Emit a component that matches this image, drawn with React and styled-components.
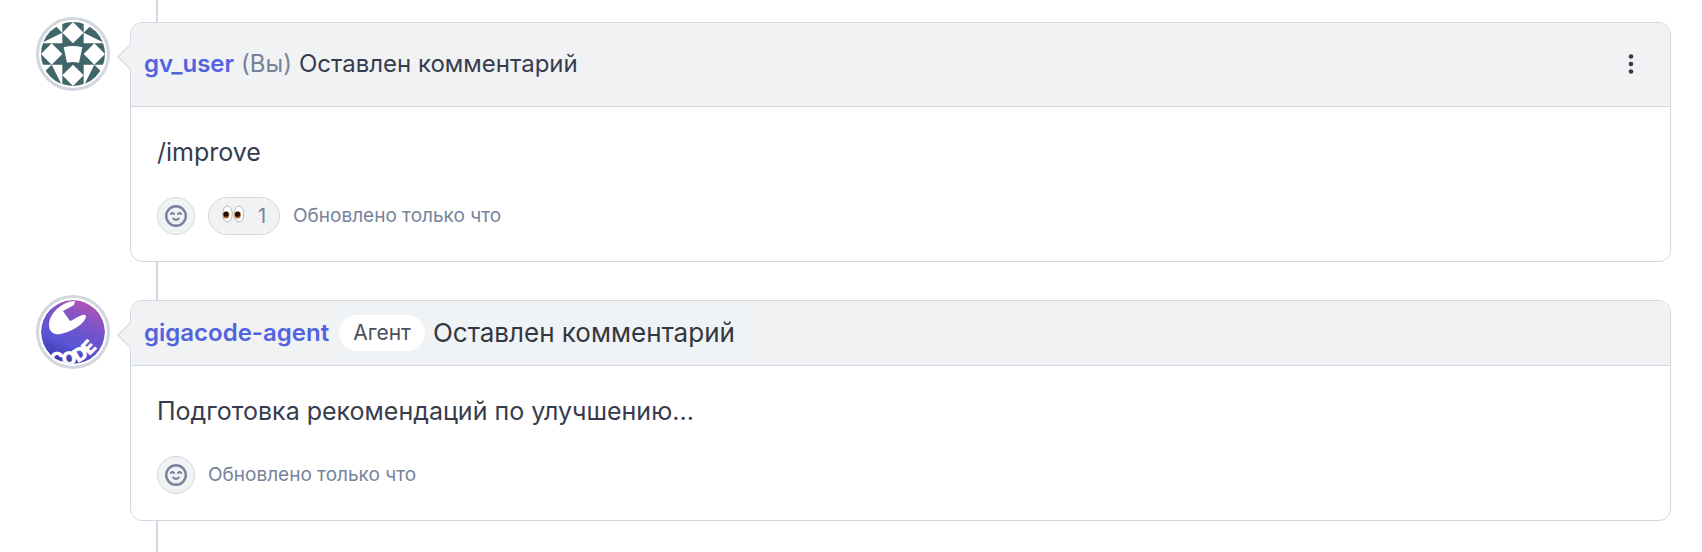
import React from 'react';
import styled, { createGlobalStyle } from 'styled-components';

const GlobalStyle = createGlobalStyle`
  *, *::before, *::after {
    box-sizing: border-box;
  }

  body {
    margin: 0;
    background: #ffffff;
    color: #363c4d;
    font-family: Inter, 'Noto Sans', sans-serif;
    font-size: 24px;
    line-height: 36px;
  }
`;

const PatternAvatar = () => (
  <svg viewBox="0 0 96 96" role="img" aria-label="gv_user">
    <clipPath id="pattern-clip">
      <circle cx="48" cy="48" r="48" />
    </clipPath>
    <g clipPath="url(#pattern-clip)">
      <rect width="96" height="96" fill="#ffffff" />
      <g fill="#41666a">
        <path d="M0 32L16 0L32 16Z" />
        <path d="M96 32L80 0L64 16Z" />
        <path d="M32 96L0 80L16 64Z" />
        <path d="M64 96L96 80L80 64Z" />
        <path d="M32 0H64V96H32Z" />
        <path d="M0 32H96V64H0Z" />
      </g>
      <g fill="#ffffff">
        <path d="M48 0L64 16L48 32L32 16Z" />
        <path d="M48 64L64 80L48 96L32 80Z" />
        <path d="M16 32L32 48L16 64L0 48Z" />
        <path d="M80 32L96 48L80 64L64 48Z" />
        <path d="M34 38Q48 34 62 38L57 61Q48 59 39 61Z" />
      </g>
    </g>
  </svg>
);

const AgentAvatar = () => (
  <svg viewBox="0 0 64 64" role="img" aria-label="gigacode-agent">
    <defs>
      <linearGradient id="agent-fill" x1="0.75" y1="0" x2="0.35" y2="1">
        <stop offset="0" stopColor="#b455b4" />
        <stop offset="0.45" stopColor="#6f54cc" />
        <stop offset="0.7" stopColor="#5955d6" />
        <stop offset="1" stopColor="#3f35ac" />
      </linearGradient>
      <clipPath id="agent-clip">
        <circle cx="32" cy="32" r="32" />
      </clipPath>
      <path id="agent-arc" d="M5 64Q47 74 67 30" />
    </defs>
    <g clipPath="url(#agent-clip)">
      <circle cx="32" cy="32" r="32" fill="url(#agent-fill)" />
      <path
        d="M34 1C22 1 8 13 8 25C8 34 16 36 23 33C34 30 45 22 45 16C43 12 36 18 29 21L22 11L33 5Z"
        fill="#ffffff"
      />
      <text fill="#ffffff" fontSize="19" fontWeight="900">
        <textPath href="#agent-arc" startOffset="3">CODE</textPath>
      </text>
    </g>
  </svg>
);

const Smile = () => (
  <svg
    width="22"
    height="22"
    viewBox="0 0 22 22"
    fill="none"
    stroke="#76839a"
    strokeWidth="2"
    strokeLinecap="round"
    aria-hidden="true"
  >
    <circle cx="11" cy="11" r="9.8" strokeWidth="2.4" />
    <path d="M5.8 9Q7.4 7.2 9 9M13 9Q14.6 7.2 16.2 9" />
    <path d="M8.2 13.6Q11 16.2 13.8 13.6" />
  </svg>
);

const Eyes = () => (
  <svg width="24" height="22" viewBox="0 0 24 22" aria-hidden="true">
    <g fill="#ffffff" stroke="#b8b8b8">
      <ellipse cx="5.5" cy="9" rx="4.8" ry="8" />
      <ellipse cx="17" cy="9" rx="4.8" ry="8" />
    </g>
    <g fill="#a8681c">
      <ellipse cx="4.2" cy="9.8" rx="3.2" ry="3.6" />
      <ellipse cx="15.7" cy="9.8" rx="3.2" ry="3.6" />
    </g>
    <g fill="#1d0d05">
      <circle cx="4" cy="9.2" r="2.5" />
      <circle cx="15.5" cy="9.2" r="2.5" />
    </g>
  </svg>
);

const Dots = () => (
  <svg width="6" height="20" viewBox="0 0 6 20" fill="#363c4d" aria-hidden="true">
    <circle cx="3" cy="2.5" r="2.3" />
    <circle cx="3" cy="10" r="2.3" />
    <circle cx="3" cy="17.5" r="2.3" />
  </svg>
);

const App = () => (
  <>
    <GlobalStyle />
    <Timeline>
      <Row>
        <Avatar>
          <PatternAvatar />
        </Avatar>
        <Card>
          <Header $tall>
            <Author href="#gv_user">gv_user</Author>
            <You>(Вы)</You>
            <span>Оставлен комментарий</span>
            <MenuButton type="button" aria-label="Меню">
              <Dots />
            </MenuButton>
          </Header>
          <Body>
            <Message>/improve</Message>
            <Footer>
              <ReactionButton type="button" aria-label="Добавить реакцию">
                <Smile />
              </ReactionButton>
              <CountButton type="button">
                <Eyes />
                1
              </CountButton>
              <Updated>Обновлено только что</Updated>
            </Footer>
          </Body>
        </Card>
      </Row>

      <Row>
        <Avatar>
          <AgentAvatar />
        </Avatar>
        <Card>
          <Header>
            <Author href="#gigacode-agent">gigacode-agent</Author>
            <AgentNote>
              <Badge>Агент</Badge>
              <span>Оставлен комментарий</span>
            </AgentNote>
          </Header>
          <Body>
            <Message>Подготовка рекомендаций по улучшению...</Message>
            <Footer>
              <ReactionButton type="button" aria-label="Добавить реакцию">
                <Smile />
              </ReactionButton>
              <Updated>Обновлено только что</Updated>
            </Footer>
          </Body>
        </Card>
      </Row>
    </Timeline>
  </>
);

const Timeline = styled.main`
  position: relative;
  display: flex;
  flex-direction: column;
  gap: 33px;
  min-height: 100vh;
  padding: 17px 31px 31px 36px;

  &::before {
    content: '';
    position: absolute;
    top: 0;
    bottom: 0;
    left: 156px;
    width: 2px;
    background: #d2d8e2;
  }
`;

const Row = styled.article`
  position: relative;
  display: flex;
  align-items: flex-start;
  gap: 20px;
`;

const Avatar = styled.div`
  flex: none;
  width: 74px;
  height: 74px;
  padding: 2px;
  border: 3px solid #d2d7df;
  border-radius: 50%;
  background: #ffffff;

  svg {
    display: block;
    width: 100%;
    height: 100%;
  }
`;

const Card = styled.section`
  position: relative;
  flex: 1;
  min-width: 0;
  margin-top: 5px;
  border: 1px solid #d2d8e2;
  border-radius: 12px;
  background: #ffffff;

  &::before {
    content: '';
    position: absolute;
    top: 25px;
    left: -10px;
    width: 18px;
    height: 18px;
    border: 1px solid #d2d8e2;
    border-top-color: transparent;
    border-right-color: transparent;
    background: #f1f2f4;
    transform: rotate(45deg);
  }
`;

const Header = styled.header`
  position: relative;
  display: flex;
  align-items: center;
  gap: 7px;
  min-height: ${({ $tall }) => ($tall ? '84px' : '65px')};
  padding: ${({ $tall }) => ($tall ? '0 26px 2px 13px' : '0 26px 0 13px')};
  border-bottom: 1px solid #d2d8e2;
  border-radius: 11px 11px 0 0;
  background: #f1f2f4;
`;

const Author = styled.a`
  color: #5264dd;
  font-weight: 600;
  text-decoration: none;
`;

const You = styled.span`
  color: #76839a;
`;

const MenuButton = styled.button`
  display: flex;
  align-items: center;
  justify-content: center;
  width: 26px;
  height: 32px;
  margin-left: auto;
  padding: 0;
  border: 0;
  background: transparent;
  cursor: pointer;
`;

const AgentNote = styled.div`
  display: flex;
  align-items: center;
  gap: 8px;
  margin-left: 3px;
  padding: 8px 14px 8px 0;
  background: #eff3f6;
  color: #333740;
  font-size: 26px;
`;

const Badge = styled.span`
  padding: 0 14px;
  border-radius: 18px;
  background: #ffffff;
  color: #4a505c;
  font-size: 21px;
`;

const Body = styled.div`
  padding: 27px 26px 26px;
`;

const Message = styled.p`
  margin: 0 0 27px;
  font-size: 25px;
`;

const Footer = styled.div`
  display: flex;
  align-items: center;
  gap: 13px;
`;

const ReactionButton = styled.button`
  display: flex;
  align-items: center;
  justify-content: center;
  width: 38px;
  height: 38px;
  padding: 0;
  border: 1px solid #d2d8e2;
  border-radius: 19px;
  background: #f1f2f4;
  cursor: pointer;
`;

const CountButton = styled(ReactionButton)`
  gap: 12px;
  width: 72px;
  color: #76839a;
  font-family: inherit;
  font-size: 20px;
`;

const Updated = styled.span`
  color: #76839a;
  font-size: 19px;
`;

export default App;
